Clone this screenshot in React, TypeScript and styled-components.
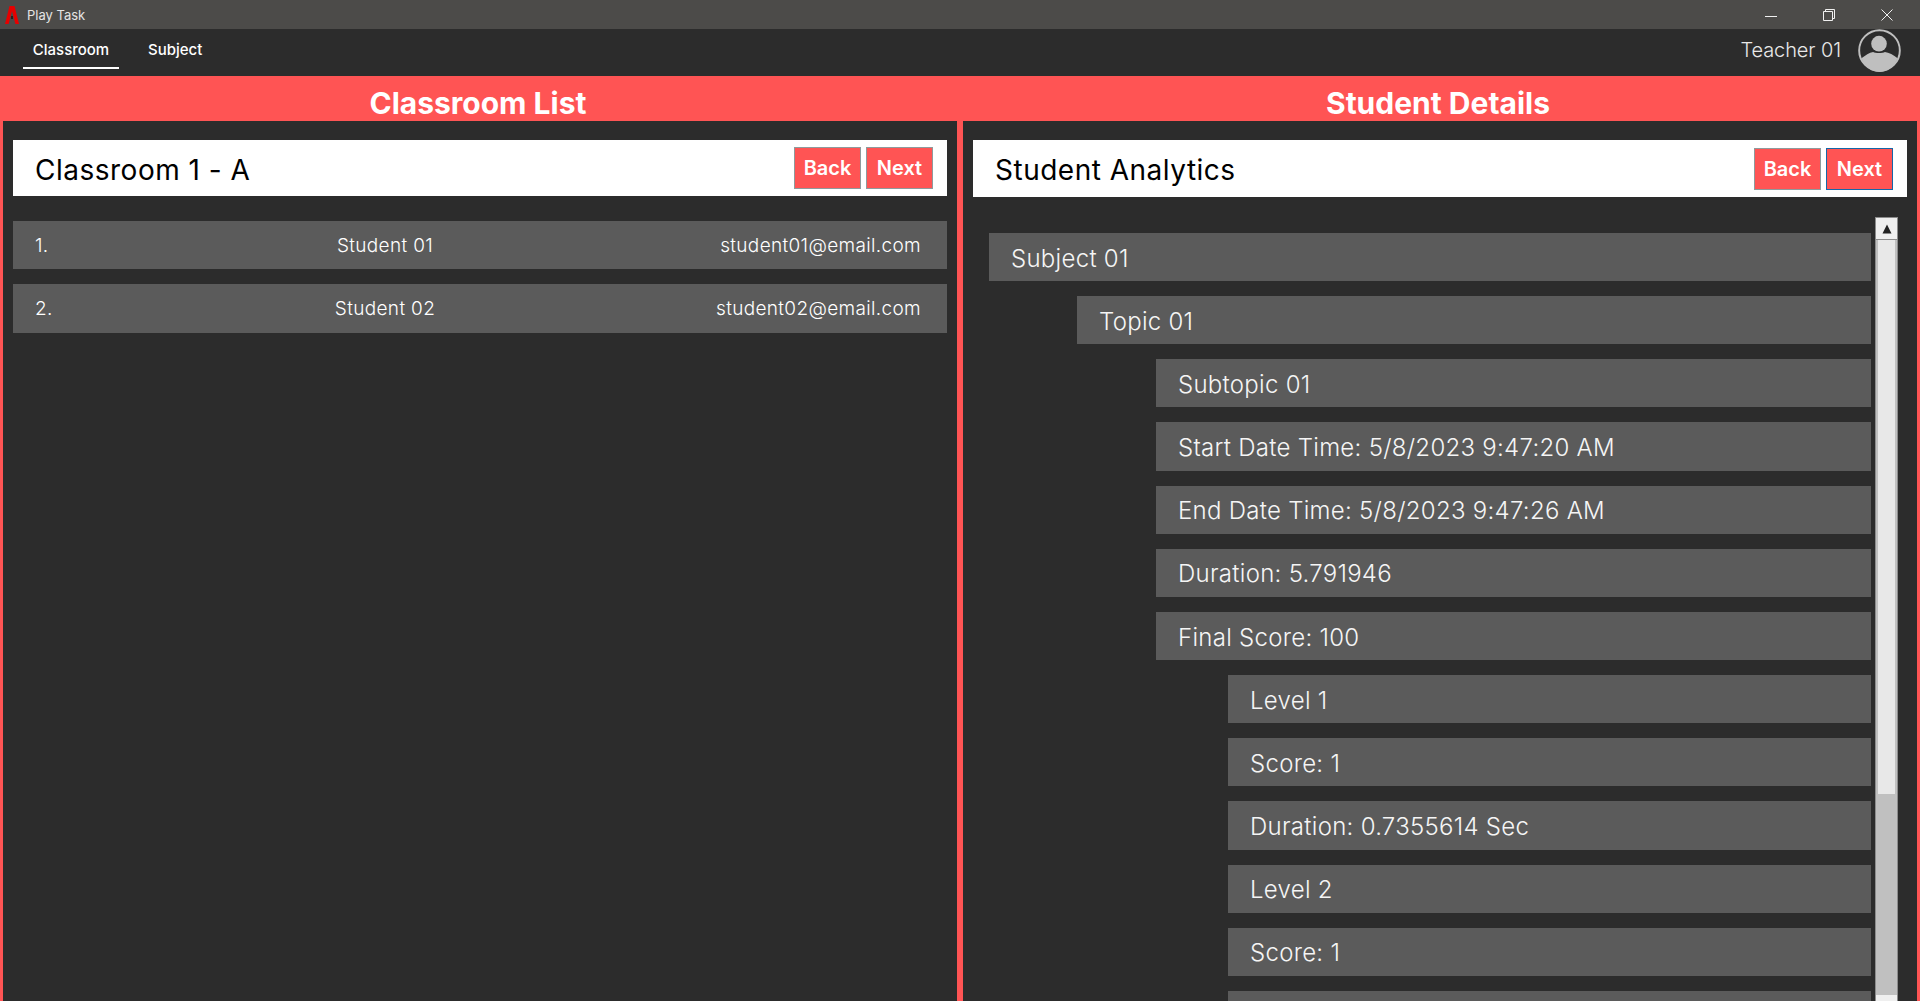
import styled, { createGlobalStyle } from 'styled-components';

const GlobalStyle = createGlobalStyle`
  html, body {
    margin: 0;
    padding: 0;
    height: 100%;
    overflow: hidden;
    background: #2c2c2c;
  }
  * {
    box-sizing: border-box;
  }
`;

const students = [
  { no: '1.', name: 'Student 01', email: 'student01@email.com' },
  { no: '2.', name: 'Student 02', email: 'student02@email.com' },
];

const analytics: { text: string; level: number }[] = [
  { text: 'Subject 01', level: 0 },
  { text: 'Topic 01', level: 1 },
  { text: 'Subtopic 01', level: 2 },
  { text: 'Start Date Time: 5/8/2023 9:47:20 AM', level: 2 },
  { text: 'End Date Time: 5/8/2023 9:47:26 AM', level: 2 },
  { text: 'Duration: 5.791946', level: 2 },
  { text: 'Final Score: 100', level: 2 },
  { text: 'Level 1', level: 3 },
  { text: 'Score: 1', level: 3 },
  { text: 'Duration: 0.7355614 Sec', level: 3 },
  { text: 'Level 2', level: 3 },
  { text: 'Score: 1', level: 3 },
  { text: '', level: 3 },
];

export default function App() {
  return (
    <Shell>
      <GlobalStyle />
      <TitleBar>
        <AppLogo viewBox="0 0 14 18">
          <path d="M4.500 0h5L14 18h-3.600L7 5 3.600 18H0z" fill="#e60000" />
          <rect x="6" y="10" width="2" height="3" fill="#222" />
        </AppLogo>
        <AppName>Play Task</AppName>
        <WindowButtons>
          <WindowButton>
            <svg width="12" height="12" viewBox="0 0 12 12">
              <path d="M0 7.500h12" stroke="#f0f0f0" fill="none" />
            </svg>
          </WindowButton>
          <WindowButton>
            <svg width="12" height="12" viewBox="0 0 12 12">
              <path d="M.5 2.500h9v9h-9zM2.500 2.500v-2h9v9h-2" stroke="#f0f0f0" fill="none" />
            </svg>
          </WindowButton>
          <WindowButton>
            <svg width="12" height="12" viewBox="0 0 12 12">
              <path d="M.5.5l11 11M11.500.5l-11 11" stroke="#f0f0f0" fill="none" />
            </svg>
          </WindowButton>
        </WindowButtons>
      </TitleBar>

      <NavBar>
        <NavTab $active>Classroom</NavTab>
        <NavTab>Subject</NavTab>
        <UserArea>
          <UserName>Teacher 01</UserName>
          <Avatar viewBox="0 0 44 44">
            <circle cx="22" cy="22" r="20.800" fill="none" stroke="#bfbfbf" strokeWidth="2" />
            <circle cx="21.500" cy="15" r="8" fill="#bfbfbf" />
            <path d="M3.500 30c4-3 8-6 12-6.500 2 1.500 10 1.500 12 0 4 .5 9 3 13 6.500-3 8-10 14-18.500 14S6.500 38 3.500 30z" fill="#bfbfbf" />
          </Avatar>
        </UserArea>
      </NavBar>

      <Columns>
        <Column>
          <ColumnTitle>Classroom List</ColumnTitle>
          <Panel>
            <PanelHeader>
              <PanelHeading>Classroom 1 - A</PanelHeading>
              <ActionButton>Back</ActionButton>
              <ActionButton>Next</ActionButton>
            </PanelHeader>
            <StudentList>
              {students.map((s) => (
                <StudentRow key={s.no}>
                  <span>{s.no}</span>
                  <StudentName>{s.name}</StudentName>
                  <StudentEmail>{s.email}</StudentEmail>
                </StudentRow>
              ))}
            </StudentList>
          </Panel>
        </Column>

        <Column>
          <ColumnTitle>Student Details</ColumnTitle>
          <Panel>
            <PanelHeader $tall>
              <PanelHeading>Student Analytics</PanelHeading>
              <ActionButton>Back</ActionButton>
              <ActionButton $focused>Next</ActionButton>
            </PanelHeader>
            <TreeArea>
              <Tree>
                {analytics.map((row, i) => (
                  <TreeRow key={i} $level={row.level}>
                    {row.text}
                  </TreeRow>
                ))}
              </Tree>
              <ScrollBar>
                <ScrollUp>
                  <svg width="10" height="10" viewBox="0 0 10 10">
                    <path d="M5 .5l4.500 9H.5z" fill="#222" />
                  </svg>
                </ScrollUp>
                <ScrollThumb />
                <ScrollDown />
              </ScrollBar>
            </TreeArea>
          </Panel>
        </Column>
      </Columns>
    </Shell>
  );
}

const indents = [0, 88, 167, 239];

const Shell = styled.div`
  height: 100vh;
  display: flex;
  flex-direction: column;
  overflow: hidden;
  font-family: Inter, 'Liberation Sans', sans-serif;
  color: #fff;
`;

const TitleBar = styled.div`
  height: 29px;
  flex: none;
  display: flex;
  align-items: center;
  padding-left: 5px;
  background: #4c4b49;
`;

const AppLogo = styled.svg`
  width: 14px;
  height: 18px;
  margin-right: 8px;
`;

const AppName = styled.span`
  font-size: 13px;
  color: #e4e4e4;
`;

const WindowButtons = styled.div`
  margin-left: auto;
  display: flex;
  padding-right: 27px;
  gap: 46px;
`;

const WindowButton = styled.div`
  width: 12px;
  height: 12px;
  display: flex;
`;

const NavBar = styled.div`
  height: 47px;
  flex: none;
  display: flex;
  align-items: stretch;
  padding-left: 23px;
  background: #2c2c2c;
`;

const NavTab = styled.div<{ $active?: boolean }>`
  width: ${(p) => (p.$active ? '96px' : 'auto')};
  margin-left: ${(p) => (p.$active ? '0' : '29px')};
  height: 40px;
  display: flex;
  align-items: center;
  justify-content: center;
  font-size: 15px;
  font-weight: 500;
  padding-top: 2px;
  border-bottom: 2px solid ${(p) => (p.$active ? '#fff' : 'transparent')};
`;

const UserArea = styled.div`
  margin-left: auto;
  display: flex;
  align-items: center;
  padding-right: 19px;
`;

const UserName = styled.span`
  font-size: 20px;
  font-weight: 300;
  color: #e8e8e8;
  margin: 0 17px 5px 0;
  letter-spacing: -0.1px;
`;

const Avatar = styled.svg`
  width: 43px;
  height: 43px;
  margin-top: -5px;
`;

const Columns = styled.div`
  flex: 1;
  min-height: 0;
  display: grid;
  grid-template-columns: 1fr 1fr;
  column-gap: 6px;
  padding: 0 3px;
  background: #ff5454;
`;

const Column = styled.div`
  display: flex;
  flex-direction: column;
  min-height: 0;
`;

const ColumnTitle = styled.h2`
  height: 45px;
  flex: none;
  margin: 0;
  padding: 8px 4px 0 0;
  display: flex;
  align-items: center;
  justify-content: center;
  font-size: 30px;
  font-weight: 700;
`;

const Panel = styled.div`
  flex: 1;
  min-height: 0;
  display: flex;
  flex-direction: column;
  padding: 19px 10px 0;
  background: #2c2c2c;
`;

const PanelHeader = styled.div<{ $tall?: boolean }>`
  height: ${(p) => (p.$tall ? '57px' : '56px')};
  flex: none;
  display: flex;
  align-items: center;
  gap: 5px;
  padding: 0 14px 0 22px;
  background: #fff;
`;

const PanelHeading = styled.div`
  margin-right: auto;
  padding-top: 3px;
  font-size: 28px;
  letter-spacing: 0.5px;
  color: #000;
`;

const ActionButton = styled.div<{ $focused?: boolean }>`
  width: 67px;
  height: 42px;
  display: flex;
  align-items: center;
  justify-content: center;
  font-size: 20px;
  font-weight: 600;
  background: #ff5454;
  border: 1px solid ${(p) => (p.$focused ? '#1567a8' : '#8f9a9c')};
`;

const StudentList = styled.div`
  margin-top: 25px;
  display: flex;
  flex-direction: column;
  gap: 15px;
`;

const StudentRow = styled.div`
  height: 48.3px;
  display: grid;
  grid-template-columns: 240px 220px 1fr;
  align-items: center;
  padding: 1px 26px 0 22px;
  font-size: 19px;
  font-weight: 300;
  letter-spacing: 0.34px;
  background: #5b5b5b;
`;

const StudentName = styled.span`
  text-align: center;
`;

const StudentEmail = styled.span`
  text-align: right;
`;

const TreeArea = styled.div`
  flex: 1;
  min-height: 0;
  display: flex;
  margin-top: 20px;
  padding-left: 16px;
`;

const Tree = styled.div`
  flex: 1;
  min-width: 0;
  margin-top: 16px;
  display: flex;
  flex-direction: column;
  gap: 15px;
`;

const TreeRow = styled.div<{ $level: number }>`
  height: 48.16px;
  flex: none;
  display: flex;
  align-items: center;
  margin-left: ${(p) => indents[p.$level]}px;
  padding: 2px 0 0 22px;
  font-size: 24px;
  font-weight: 300;
  letter-spacing: 0.28px;
  color: #f5f5f5;
  background: #5b5b5b;
`;

const ScrollBar = styled.div`
  width: 23px;
  flex: none;
  margin-left: 4px;
  margin-right: 9px;
  display: flex;
  flex-direction: column;
  align-items: center;
  background: #c0c0c0;
  border-left: 1px solid #8c8c8c;
  border-right: 1px solid #8c8c8c;
`;

const ScrollUp = styled.div`
  width: 23px;
  height: 23px;
  flex: none;
  display: flex;
  align-items: center;
  justify-content: center;
  background: #efefef;
  border: 1px solid #8c8c8c;
`;

const ScrollThumb = styled.div`
  width: 17px;
  height: 554px;
  flex: none;
  margin-bottom: 201px;
  background: #e8e8e8;
`;

const ScrollDown = styled.div`
  width: 21px;
  height: 23px;
  flex: none;
  background: #efefef;
`;
